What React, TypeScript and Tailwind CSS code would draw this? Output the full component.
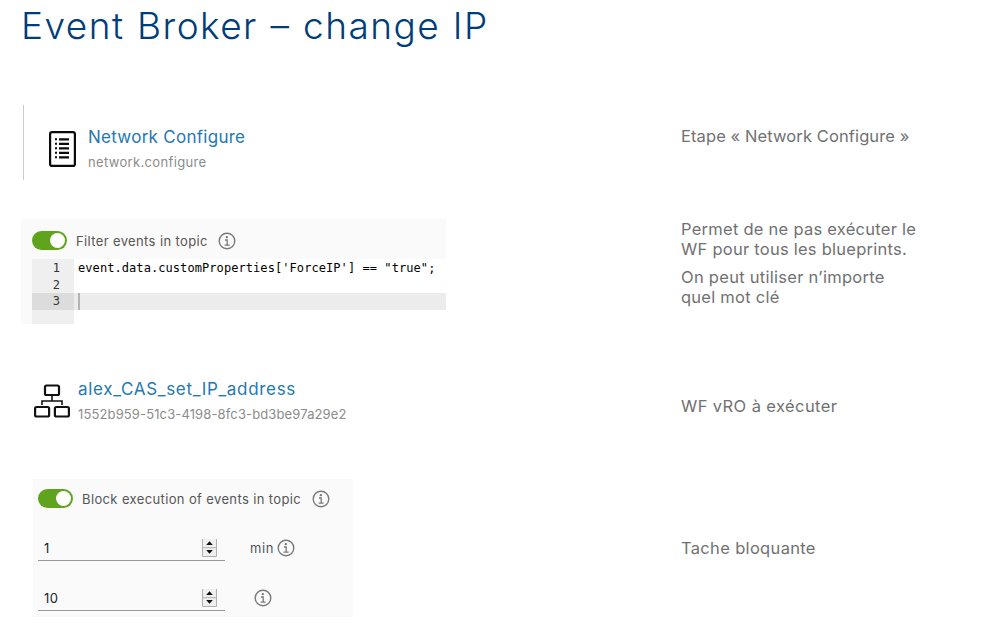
function Toggle() {
  return (
    <span className="flex h-[19px] w-[35px] shrink-0 items-center justify-end rounded-full bg-[#60a31d] pr-[2px]">
      <span className="size-[15px] rounded-full bg-white" />
    </span>
  );
}

function InfoIcon() {
  return (
    <svg className="size-[18px] shrink-0" viewBox="0 0 18 18" fill="none" stroke="#7a7a7a">
      <circle cx="9" cy="9" r="7.8" strokeWidth="1.4" />
      <circle cx="8.8" cy="5.2" r="1.15" fill="#747474" stroke="none" />
      <path d="M7 8h2.2v5M6.6 13.1h5" strokeWidth="1.3" />
    </svg>
  );
}

function DocumentIcon() {
  return (
    <svg className="h-9 w-[27px] shrink-0" viewBox="0 0 27 36" fill="none" stroke="#0a0a0a">
      <rect x="1.1" y="1.1" width="24.8" height="33.8" rx="2" strokeWidth="2.2" />
      <path d="M6 8.3h2M6 12.8h2M6 17.3h2M6 21.8h2M6 26.3h2" strokeWidth="2" />
      <path d="M10 8.3h10M10 12.8h10M10 17.3h10M10 21.8h10M10 26.3h10" strokeWidth="2.3" />
    </svg>
  );
}

function WorkflowIcon() {
  return (
    <svg className="h-[34px] w-9 shrink-0" viewBox="0 0 36 34" fill="none" stroke="#111" strokeWidth="2.2">
      <rect x="11" y="1.5" width="14" height="9.5" rx="1.6" />
      <rect x="1.1" y="23" width="14" height="9.5" rx="1.6" />
      <rect x="20.9" y="23" width="14" height="9.5" rx="1.6" />
      <path d="M18 11v6M8 21v-4h20v4" strokeWidth="1.6" />
    </svg>
  );
}

function Spinner() {
  return (
    <svg className="h-[18px] w-[15px]" viewBox="0 0 15 18">
      <rect width="15" height="18" fill="#efefef" />
      <path d="M.5 0v17.500h14V0M0 8.700h15" fill="none" stroke="#b0b0b0" />
      <path d="M7.500 2.300 10.800 6H4.200zM7.500 14.800 4.200 11h6.600z" fill="#111" />
    </svg>
  );
}

function NumberField({ value }: { value: string }) {
  return (
    <div className="flex h-[23px] w-[187px] items-start justify-between border-b border-[#999] pl-[6px] pr-[8px]">
      <span className="text-[13px] leading-5 tracking-[0.5px] text-[#222]">{value}</span>
      <span className="pt-px">
        <Spinner />
      </span>
    </div>
  );
}

export default function App() {
  return (
    <div className="h-[640px] w-[983px] overflow-hidden bg-white font-['Inter',sans-serif]">
      <h1 className="h-[105px] pl-[21px] text-[37px] font-light leading-[51px] tracking-[1.45px] text-[#003d79] [word-spacing:0.8px]">
        Event Broker – change IP
      </h1>

      <section className="flex h-[114px]">
        <div className="w-[681px] pl-[23px]">
          <div className="flex h-[75px] items-start border-l border-[#ccc] pl-[25px] pt-5">
            <div className="pt-[6px]">
              <DocumentIcon />
            </div>
            <div className="pl-3">
              <p className="text-[17px] leading-6 tracking-[0.27px] text-[#2478b3]">Network Configure</p>
              <p className="mt-[3px] text-[13px] leading-5 tracking-[0.34px] text-[#8c8c8c]">network.configure</p>
            </div>
          </div>
        </div>
        <p className="pt-[21px] text-[16.5px] leading-5 tracking-[0.1px] text-[#717171]">
          Etape « Network Configure »
        </p>
      </section>

      <section className="flex h-[158px]">
        <div className="w-[681px] pl-[21px]">
          <div className="flex h-[105px] w-[425px] flex-col bg-[#fafafa] pl-[11px] pt-3">
            <div className="flex h-[28px] items-start">
              <Toggle />
              <span className="pl-[9px] text-[13px] leading-5 tracking-[0.37px] text-[#565656]">
                Filter events in topic
              </span>
              <span className="pl-[10px] pt-px">
                <InfoIcon />
              </span>
            </div>
            <div className="flex flex-1 bg-white font-['DejaVu_Sans_Mono',monospace] text-[12px] leading-[16.5px]">
              <div className="w-[42px] bg-[#efefef] pt-px text-right text-[#333]">
                <div className="pr-[14px]">1</div>
                <div className="pr-[14px]">2</div>
                <div className="bg-[#dcdcdc] pr-[14px]">3</div>
              </div>
              <div className="flex-1 pt-px text-black">
                <div className="whitespace-pre pl-1 tracking-[0.07px]">
                  {`event.data.customProperties['ForceIP'] == "true";`}
                </div>
                <div className="h-[16.5px]" />
                <div className="h-[16.5px] bg-[#ececec] pl-1">
                  <div className="h-full w-[2px] bg-[#b3b3b3]" />
                </div>
              </div>
            </div>
          </div>
        </div>
        <div className="text-[16.5px] leading-5 text-[#717171]">
          <p className="tracking-[0.26px]">Permet de ne pas exécuter le</p>
          <p className="tracking-[0.25px]">WF pour tous les blueprints.</p>
          <p className="mt-2 tracking-[0.28px]">On peut utiliser n’importe</p>
          <p className="tracking-[0.25px]">quel mot clé</p>
        </div>
      </section>

      <section className="flex h-[102px]">
        <div className="flex w-[681px] pl-[34px]">
          <div className="pt-[7px]">
            <WorkflowIcon />
          </div>
          <div className="pl-2">
            <p className="text-[17px] leading-6 tracking-[0.68px] text-[#2478b3]">alex_CAS_set_IP_address</p>
            <p className="mt-[3px] text-[13px] leading-5 tracking-[0.13px] text-[#8c8c8c]">
              1552b959-51c3-4198-8fc3-bd3be97a29e2
            </p>
          </div>
        </div>
        <p className="pt-[19px] text-[16.5px] leading-5 tracking-[0.4px] text-[#717171]">WF vRO à exécuter</p>
      </section>

      <section className="flex">
        <div className="w-[681px] pl-[33px]">
          <div className="h-[138px] w-[320px] bg-[#fafafa] pl-[5px] pt-[10px] text-[13px] leading-5 text-[#565656]">
            <div className="flex h-[49px] items-start">
              <Toggle />
              <span className="pl-[9px] tracking-[0.37px]">Block execution of events in topic</span>
              <span className="pl-[11px] pt-px">
                <InfoIcon />
              </span>
            </div>
            <div className="flex h-[50px] items-start">
              <NumberField value="1" />
              <span className="pl-[25px] tracking-[0.6px]">min</span>
              <span className="pl-[3px] pt-px">
                <InfoIcon />
              </span>
            </div>
            <div className="flex items-start">
              <NumberField value="10" />
              <span className="pl-[29px] pt-px">
                <InfoIcon />
              </span>
            </div>
          </div>
        </div>
        <p className="pt-[59px] text-[16.5px] leading-5 tracking-[0.33px] text-[#717171]">Tache bloquante</p>
      </section>
    </div>
  );
}
